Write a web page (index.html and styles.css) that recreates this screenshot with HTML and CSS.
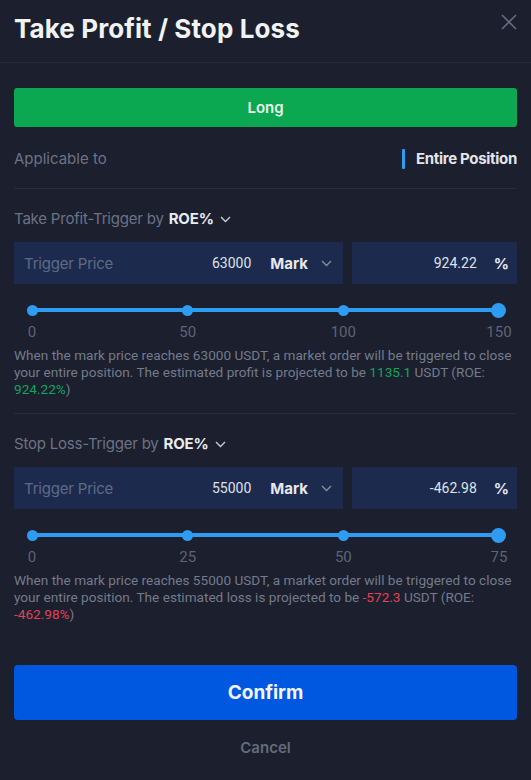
FILE: index.html
```html
<!DOCTYPE html>
<html>
<head>
<meta charset="utf-8">
<link rel="stylesheet" href="styles.css">
</head>
<body>
<div class="modal">
  <header class="head">
    <h1 class="title">Take Profit / Stop Loss</h1>
    <svg class="close" width="16" height="16" viewBox="0 0 16 16"><path d="M1 1L15 15M15 1L1 15" stroke="#646b7e" stroke-width="1.6" fill="none"/></svg>
  </header>
  <div class="body">
    <div class="side-btn">Long</div>
    <div class="applicable">
      <span class="muted">Applicable to</span>
      <span class="entire"><span class="bar"></span>Entire Position</span>
    </div>

    <section class="sec divided">
      <div class="sec-label"><span class="muted">Take Profit-Trigger by</span><span class="roe">ROE%</span><svg class="chev" width="11" height="7" viewBox="0 0 11 7"><path d="M1 1L5.5 5.5L10 1" stroke="#c9ccd3" stroke-width="1.4" fill="none"/></svg></div>
      <div class="inputs">
        <div class="box left">
          <span class="ph">Trigger Price</span>
          <span class="val">63000</span>
          <span class="mark">Mark</span>
          <svg class="chev2" width="11" height="7" viewBox="0 0 11 7"><path d="M1 1L5.5 5.5L10 1" stroke="#8a90a0" stroke-width="1.3" fill="none"/></svg>
        </div>
        <div class="box right">
          <span class="val">924.22</span>
          <span class="pct">%</span>
        </div>
      </div>
      <div class="slider">
        <span class="tick"><span class="dot"></span></span>
        <span class="tick"><span class="dot"></span></span>
        <span class="tick"><span class="dot"></span></span>
        <span class="tick"><span class="dot thumb"></span></span>
      </div>
      <div class="labels">
        <span class="tick"><span>0</span></span>
        <span class="tick"><span>50</span></span>
        <span class="tick"><span>100</span></span>
        <span class="tick"><span>150</span></span>
      </div>
      <p class="desc">When the mark price reaches 63000 USDT, a market order will be triggered to close your entire position. The estimated profit is projected to be <span class="green">1135.1</span> USDT (ROE: <span class="green">924.22%</span>)</p>
    </section>

    <section class="sec">
      <div class="sec-label"><span class="muted">Stop Loss-Trigger by</span><span class="roe">ROE%</span><svg class="chev" width="11" height="7" viewBox="0 0 11 7"><path d="M1 1L5.5 5.5L10 1" stroke="#c9ccd3" stroke-width="1.4" fill="none"/></svg></div>
      <div class="inputs">
        <div class="box left">
          <span class="ph">Trigger Price</span>
          <span class="val">55000</span>
          <span class="mark">Mark</span>
          <svg class="chev2" width="11" height="7" viewBox="0 0 11 7"><path d="M1 1L5.5 5.5L10 1" stroke="#8a90a0" stroke-width="1.3" fill="none"/></svg>
        </div>
        <div class="box right">
          <span class="val">-462.98</span>
          <span class="pct">%</span>
        </div>
      </div>
      <div class="slider">
        <span class="tick"><span class="dot"></span></span>
        <span class="tick"><span class="dot"></span></span>
        <span class="tick"><span class="dot"></span></span>
        <span class="tick"><span class="dot thumb"></span></span>
      </div>
      <div class="labels">
        <span class="tick"><span>0</span></span>
        <span class="tick"><span>25</span></span>
        <span class="tick"><span>50</span></span>
        <span class="tick"><span>75</span></span>
      </div>
      <p class="desc">When the mark price reaches 55000 USDT, a market order will be triggered to close your entire position. The estimated loss is projected to be <span class="red">-572.3</span> USDT (ROE: <span class="red">-462.98%</span>)</p>
    </section>

    <div class="confirm">Confirm</div>
    <div class="cancel">Cancel</div>
  </div>
</div>
</body>
</html>
```

FILE: styles.css
```css
html, body {
  margin: 0;
  padding: 0;
  background: #1b1f2e;
}
body {
  font-family: Inter, Roboto, "Liberation Sans", sans-serif;
  color: #eaecef;
  width: 531px;
  height: 780px;
  overflow: hidden;
}
.head {
  height: 63px;
  box-sizing: border-box;
  border-bottom: 1px solid #242a3b;
  display: flex;
  justify-content: space-between;
  align-items: flex-start;
  padding: 0 14px;
}
.title {
  margin: 14px 0 0;
  font-size: 26px;
  line-height: 30px;
  font-weight: 700;
  letter-spacing: 0.1px;
  color: #f1f2f4;
}
.close {
  margin-top: 14px;
}
.body {
  padding: 0 14px;
}
.side-btn {
  margin-top: 25px;
  height: 39px;
  background: #0ba751;
  border-radius: 3px;
  display: flex;
  align-items: center;
  justify-content: center;
  font-size: 15px;
  font-weight: 600;
  color: #e8f5ec;
}
.applicable {
  display: flex;
  justify-content: space-between;
  align-items: center;
  padding: 22px 0 19px;
  line-height: 20px;
  border-bottom: 1px solid #262c3f;
  font-size: 15px;
}
.muted {
  color: #6c7385;
}
.entire {
  display: flex;
  align-items: center;
  font-weight: 700;
  color: #e4e6ea;
  letter-spacing: -0.3px;
}
.bar {
  width: 3px;
  height: 20px;
  background: #2d9cf2;
  border-radius: 1px;
  margin-right: 11px;
}
.sec {
  padding-bottom: 15px;
}
.divided {
  border-bottom: 1px solid #262c3f;
}
.sec-label {
  margin-top: 20px;
  line-height: 20px;
  font-size: 15px;
  display: flex;
  align-items: center;
  letter-spacing: -0.2px;
}
.roe {
  margin-left: 5px;
  font-weight: 700;
  color: #eaecef;
}
.chev {
  margin-left: 6px;
}
.inputs {
  margin-top: 13px;
  display: flex;
  gap: 9px;
  height: 42px;
}
.box {
  background: #1c2a4d;
  display: flex;
  align-items: center;
  font-size: 15px;
}
.left {
  width: 329px;
  padding: 0 11px 0 10px;
  box-sizing: border-box;
}
.right {
  flex: 1;
  justify-content: flex-end;
  padding-right: 8px;
}
.ph {
  flex: 1;
  color: #5f6a86;
  letter-spacing: -0.2px;
}
.val {
  color: #dfe2e8;
  font-size: 14px;
  font-family: Roboto, sans-serif;
}
.left .val {
  margin-right: 19px;
}
.mark {
  font-weight: 700;
  color: #e6e8ec;
}
.chev2 {
  margin-left: 13px;
}
.pct {
  font-weight: 700;
  margin-left: 17px;
  color: #e6e8ec;
}
.slider, .labels {
  margin: 0 18px;
  display: flex;
  justify-content: space-between;
}
.slider {
  margin-top: 14px;
  height: 24px;
  align-items: center;
  background: linear-gradient(#2d9cf2, #2d9cf2) center / 100% 4px no-repeat;
}
.tick {
  width: 0;
  display: flex;
  justify-content: center;
}
.dot {
  flex: none;
  width: 11px;
  height: 11px;
  border-radius: 50%;
  background: #2d9cf2;
}
.dot.thumb {
  width: 15px;
  height: 15px;
}
.labels {
  margin-top: 1px;
  line-height: 18px;
  font-size: 15px;
  color: #5d6475;
  font-family: Roboto, sans-serif;
}
.labels span {
  white-space: nowrap;
}
.desc {
  margin: 6px 0 0;
  font-family: Roboto, sans-serif;
  font-size: 13.6px;
  line-height: 17px;
  color: #747b8b;
}
.green {
  color: #12a55c;
}
.red {
  color: #e04352;
}
.confirm {
  margin-top: 27px;
  height: 55px;
  background: #0058e0;
  border-radius: 4px;
  display: flex;
  align-items: center;
  justify-content: center;
  font-size: 19px;
  font-weight: 700;
  color: #f3f6fc;
}
.cancel {
  margin-top: 18px;
  text-align: center;
  font-size: 15px;
  font-weight: 600;
  line-height: 20px;
  color: #646b7b;
}
```
